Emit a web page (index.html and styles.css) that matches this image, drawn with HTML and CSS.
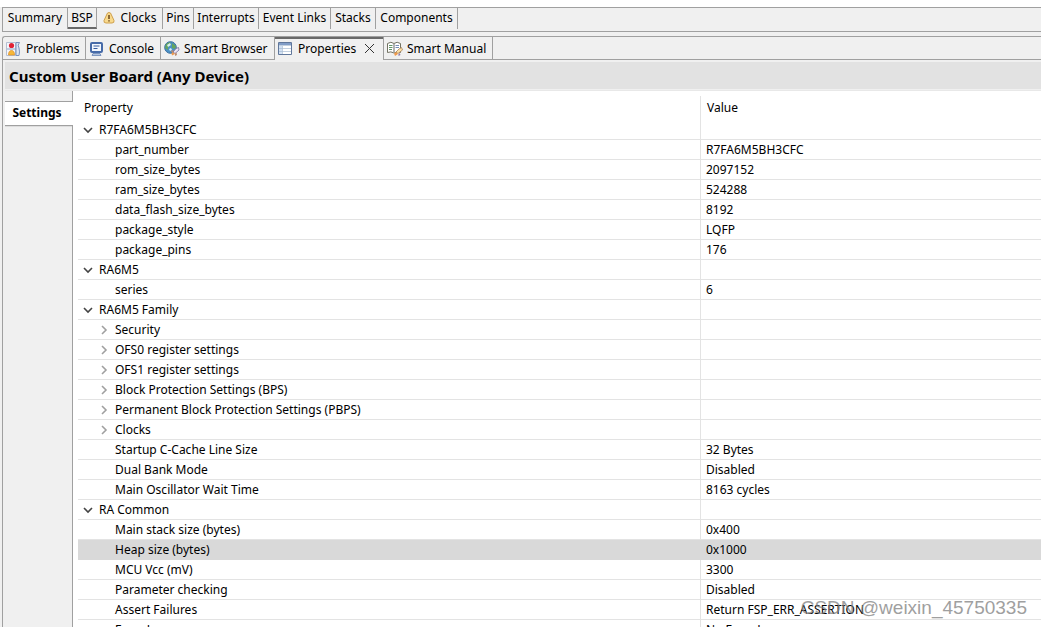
FILE: index.html
```
<!DOCTYPE html>
<html lang="en">
<head>
<meta charset="utf-8">
<title>Custom User Board (Any Device)</title>
<link rel="stylesheet" href="styles.css">
</head>
<body>
<div class="workbench">
  <nav class="editor-tabs" aria-label="Editor pages">
    <button class="page-tab summary">Summary</button>
    <button class="page-tab bsp active">BSP</button>
    <button class="page-tab clocks">
      <svg class="warn" viewBox="0 0 12 12" aria-hidden="true"><path d="M4.500 1Q6 0 7.500 1L11 8.500Q11.500 11 9 11H3Q.5 11 1 8.500Z" fill="#f8d98c" stroke="#cfa04e"/><path d="M6 3V7M6 8.200V9.600" stroke="#69451b" stroke-width="1.500"/></svg>
      Clocks</button>
    <button class="page-tab pins">Pins</button>
    <button class="page-tab interrupts">Interrupts</button>
    <button class="page-tab links">Event Links</button>
    <button class="page-tab stacks">Stacks</button>
    <button class="page-tab components">Components</button>
  </nav>
  <main class="view">
    <nav class="view-tabs" aria-label="Views">
      <button class="view-tab problems">
        <svg class="icon" viewBox="0 0 16 16" aria-hidden="true"><path d="M.5 1.500H9.500V14.500H.5Z" fill="#f4f6fb" stroke="#b4bfd2"/><path d="M10 1.500H13.500Q11 4 13 7Q14 11 13 14.500H10Z" fill="#dce6f5" stroke="#7b93bd"/><path d="M1 8H10" stroke="#8fa2c2"/><circle cx="5.500" cy="4.500" r="2.600" fill="#e02235"/><path d="M2.500 14Q2.500 9.500 5.500 9.500T8.500 14Z" fill="#f6b83a" stroke="#e08c22" stroke-width=".7"/></svg>
        Problems</button>
      <button class="view-tab console">
        <svg class="icon" viewBox="0 0 16 16" aria-hidden="true"><rect x="2" y="2" width="11" height="9" rx="1" fill="#f3f7fd" stroke="#476ba8" stroke-width="2"/><path d="M4.500 5H10.500M4.500 7.500H8.500" stroke="#365b9d"/><path d="M4 12.500H11L12 14.500H3Z" fill="#b5c5de" stroke="#6784b5" stroke-width=".8"/></svg>
        Console</button>
      <button class="view-tab browser">
        <svg class="icon" viewBox="0 0 16 16" aria-hidden="true"><circle cx="6.500" cy="6.500" r="5.800" fill="#4b91c6" stroke="#356b9d"/><path d="M2 3L6 1L7 4L4 6L4 9L1 7ZM8 2L12 5L11 8L8 7Z" fill="#66a55d"/><path d="M3 4L6 2L7 4L4 6ZM6 7L8 8L7 10L5 9Z" fill="#d8eff2"/><path d="M14.500 6.500L15 9L11 12.500L9 11L12 7.500Z" fill="#ebe7f1" stroke="#7668a0" stroke-width=".8"/><path d="M9 11L7.500 12L8 14.500L11 13Z" fill="#ef9a4d"/><path d="M9.500 9L7.500 9.500L7 11L9 11ZM12.500 11.500L13 14L11 15V12.500Z" fill="#bb8b72"/></svg>
        Smart Browser</button>
      <button class="view-tab properties active">
        <svg class="icon" viewBox="0 0 16 16" aria-hidden="true"><path d="M.5 1.500H13.500V13.500H.5Z" fill="#fff" stroke="#60779b"/><path d="M1 2H13V4H1Z" fill="#819dc7"/><path d="M1 5H4V13H1Z" fill="#d3e2f4"/><path d="M1 4.500H13M4.500 5V13M1 7.500H13M1 10.500H13" stroke="#a8bbd3" stroke-width=".7"/></svg>
        Properties
        <svg class="close" viewBox="0 0 11 11" aria-hidden="true"><path d="M1 1L10 10M10 1L1 10" stroke="#333" fill="none"/></svg></button>
      <button class="view-tab manual">
        <svg class="icon" viewBox="0 0 16 16" aria-hidden="true"><path d="M.5 2.500Q4 0 7 2.500Q10 0 13.500 2.500V11.500Q10 10 7 12Q4 10 .5 11.500Z" fill="#fff" stroke="#727262"/><path d="M7 3V11" stroke="#666"/><path d="M2 4.500H5.500M2 6.500H5.500M2 8.500H5" stroke="#629568"/><path d="M8.500 4.500H12M8.500 6.500H12" stroke="#758cb5"/><path d="M14.500 6.500L15.500 9L11 12.500L9 11L12 8Z" fill="#ffe1a4" stroke="#a8845d" stroke-width=".8"/><path d="M9 11L7 12.500L8 15L11 13Z" fill="#ef9a4d"/><path d="M12.500 12L13.500 14L11.500 15V13Z" fill="#8c79a8"/></svg>
        Smart Manual</button>
      <span class="tab-fill"></span>
    </nav>
    <h1 class="title">Custom User Board (Any Device)</h1>
    <div class="body">
      <aside class="side"><button class="side-tab">Settings</button></aside>
      <table class="props">
        <colgroup><col class="name-col"><col></colgroup>
        <thead><tr><th scope="col">Property</th><th scope="col">Value</th></tr></thead>
        <tbody id="rows"></tbody>
      </table>
    </div>
  </main>
  <div class="watermark">CSDN @weixin_45750335</div>
</div>
<script src="rows.js"></script>
</body>
</html>
```
FILE: rows.js
```
// [kind, property, value]
const rows = [
  ["group", "R7FA6M5BH3CFC", ""],
  ["leaf", "part_number", "R7FA6M5BH3CFC"],
  ["leaf", "rom_size_bytes", "2097152"],
  ["leaf", "ram_size_bytes", "524288"],
  ["leaf", "data_flash_size_bytes", "8192"],
  ["leaf", "package_style", "LQFP"],
  ["leaf", "package_pins", "176"],
  ["group", "RA6M5", ""],
  ["leaf", "series", "6"],
  ["group", "RA6M5 Family", ""],
  ["sub", "Security", ""],
  ["sub", "OFS0 register settings", ""],
  ["sub", "OFS1 register settings", ""],
  ["sub", "Block Protection Settings (BPS)", ""],
  ["sub", "Permanent Block Protection Settings (PBPS)", ""],
  ["sub", "Clocks", ""],
  ["leaf", "Startup C-Cache Line Size", "32 Bytes"],
  ["leaf", "Dual Bank Mode", "Disabled"],
  ["leaf", "Main Oscillator Wait Time", "8163 cycles"],
  ["group", "RA Common", ""],
  ["leaf", "Main stack size (bytes)", "0x400"],
  ["leaf selected", "Heap size (bytes)", "0x1000"],
  ["leaf", "MCU Vcc (mV)", "3300"],
  ["leaf", "Parameter checking", "Disabled"],
  ["leaf", "Assert Failures", "Return FSP_ERR_ASSERTION"],
  ["leaf", "Error Log", "No Error Log"]
];
const arrows = {
  group: '<svg class="arrow" viewBox="0 0 10 10"><path d="M1 3L5 7L9 3" fill="none" stroke="#444" stroke-width="1.6"/></svg>',
  sub: '<svg class="arrow" viewBox="0 0 10 10"><path d="M3 1L7 5L3 9" fill="none" stroke="#a0a0a0" stroke-width="1.6"/></svg>'
};
document.getElementById("rows").innerHTML = rows.map(([kind, name, value]) => {
  const arrow = arrows[kind] ? `<button class="toggle" aria-label="Toggle ${name}">${arrows[kind]}</button>` : "";
  return `<tr class="${kind}"><td><div class="cell">${arrow}${name}</div></td><td><div class="cell">${value}</div></td></tr>`;
}).join("");
```
FILE: styles.css
```
* { box-sizing: border-box; }
body {
  margin: 0;
  height: 100vh;
  overflow: hidden;
  background: #f0f0f0;
  color: #000;
  font: 12px/16px "Noto Sans", "Open Sans", sans-serif;
}
button { margin: 0; padding: 0; border: 0; background: none; color: inherit; font: inherit; white-space: nowrap; }
svg { flex: none; }
.workbench { display: flex; flex-direction: column; height: 100vh; padding-left: 2px; border-top: 7px solid #fff; }
.editor-tabs { display: flex; flex: none; height: 25px; border: solid #a0a0a0; border-width: 1px 0 1px 1px; }
.page-tab { display: flex; align-items: center; justify-content: center; height: 21px; padding-bottom: 2px; border-right: 1px solid #a0a0a0; }
.page-tab.active { border-bottom: 2px solid #696969; padding-bottom: 0; }
.summary { width: 65px; }
.bsp { width: 29px; }
.clocks { width: 66px; gap: 6px; }
.pins { width: 31px; }
.interrupts { width: 65px; }
.links { width: 72px; }
.stacks { width: 45px; }
.components { width: 82px; }
.warn { width: 12px; height: 12px; }
.view { display: flex; flex: 1; flex-direction: column; min-height: 0; margin-top: 4px; border: solid #a0a0a0; border-width: 1px 0 0 1px; border-top-left-radius: 3px; }
.view-tabs { display: flex; flex: none; height: 23px; }
.view-tab { display: flex; align-items: center; gap: 4px; padding: 1px 0 0 3px; border: solid #a0a0a0; border-width: 0 1px 1px 0; }
.view-tab.active { padding-top: 0; border-bottom: 0; box-shadow: inset 0 2px #696969; }
.icon { width: 16px; height: 16px; }
.problems { width: 83px; }
.console { width: 75px; }
.browser { width: 114px; }
.properties { width: 109px; }
.manual { width: 109px; }
.close { width: 11px; height: 11px; margin-left: 4px; }
.tab-fill { flex: 1; border-bottom: 1px solid #a0a0a0; }
.title { flex: none; height: 27px; margin: 2px 0 0 2px; background: #e2e2e2; padding: 0 4px; font-size: 15px; line-height: 28px; font-weight: 700; }
.body { display: flex; flex: 1; min-height: 0; margin: 1px 0 0 2px; border-top: 1px solid #e8e8e8; background: #fff; }
.side { display: flex; flex-direction: column; flex: none; width: 68px; background: #f0f0f0; }
.side::before { content: ""; height: 10px; border-right: 1px solid #a0a0a0; }
.side::after { content: ""; flex: 1; border-right: 1px solid #a0a0a0; }
.side-tab { height: 25px; border: solid #a0a0a0; border-width: 1px 0; background: #fff; font-weight: 700; box-shadow: 0 1px #ddd; padding: 0 4px 2px 0; }
.props { flex: 1; align-self: flex-start; margin: 5px 0 0 5px; border-collapse: separate; border-spacing: 0; table-layout: fixed; }
.name-col { width: 623px; }
.props th { height: 24px; padding: 0 6px; text-align: left; font-weight: 400; }
.props td { height: 20px; padding: 0; border-bottom: 1px solid #e3e3e3; }
.props th:first-child, .props td:first-child { border-right: 1px solid #e3e3e3; }
.cell { display: flex; align-items: center; height: 19px; padding-left: 5px; }
.leaf td:first-child .cell { padding-left: 37px; }
.sub td:first-child .cell { padding-left: 21px; }
.toggle { width: 16px; height: 16px; display: flex; align-items: center; }
.arrow { width: 10px; height: 10px; }
.selected td, .props .selected td:first-child { background: #d9d9d9; border-color: #d9d9d9; }
.watermark { position: absolute; right: 14px; bottom: 8px; color: #808080; opacity: .75; font: 19px/22px "Liberation Sans", sans-serif; pointer-events: none; }
```
